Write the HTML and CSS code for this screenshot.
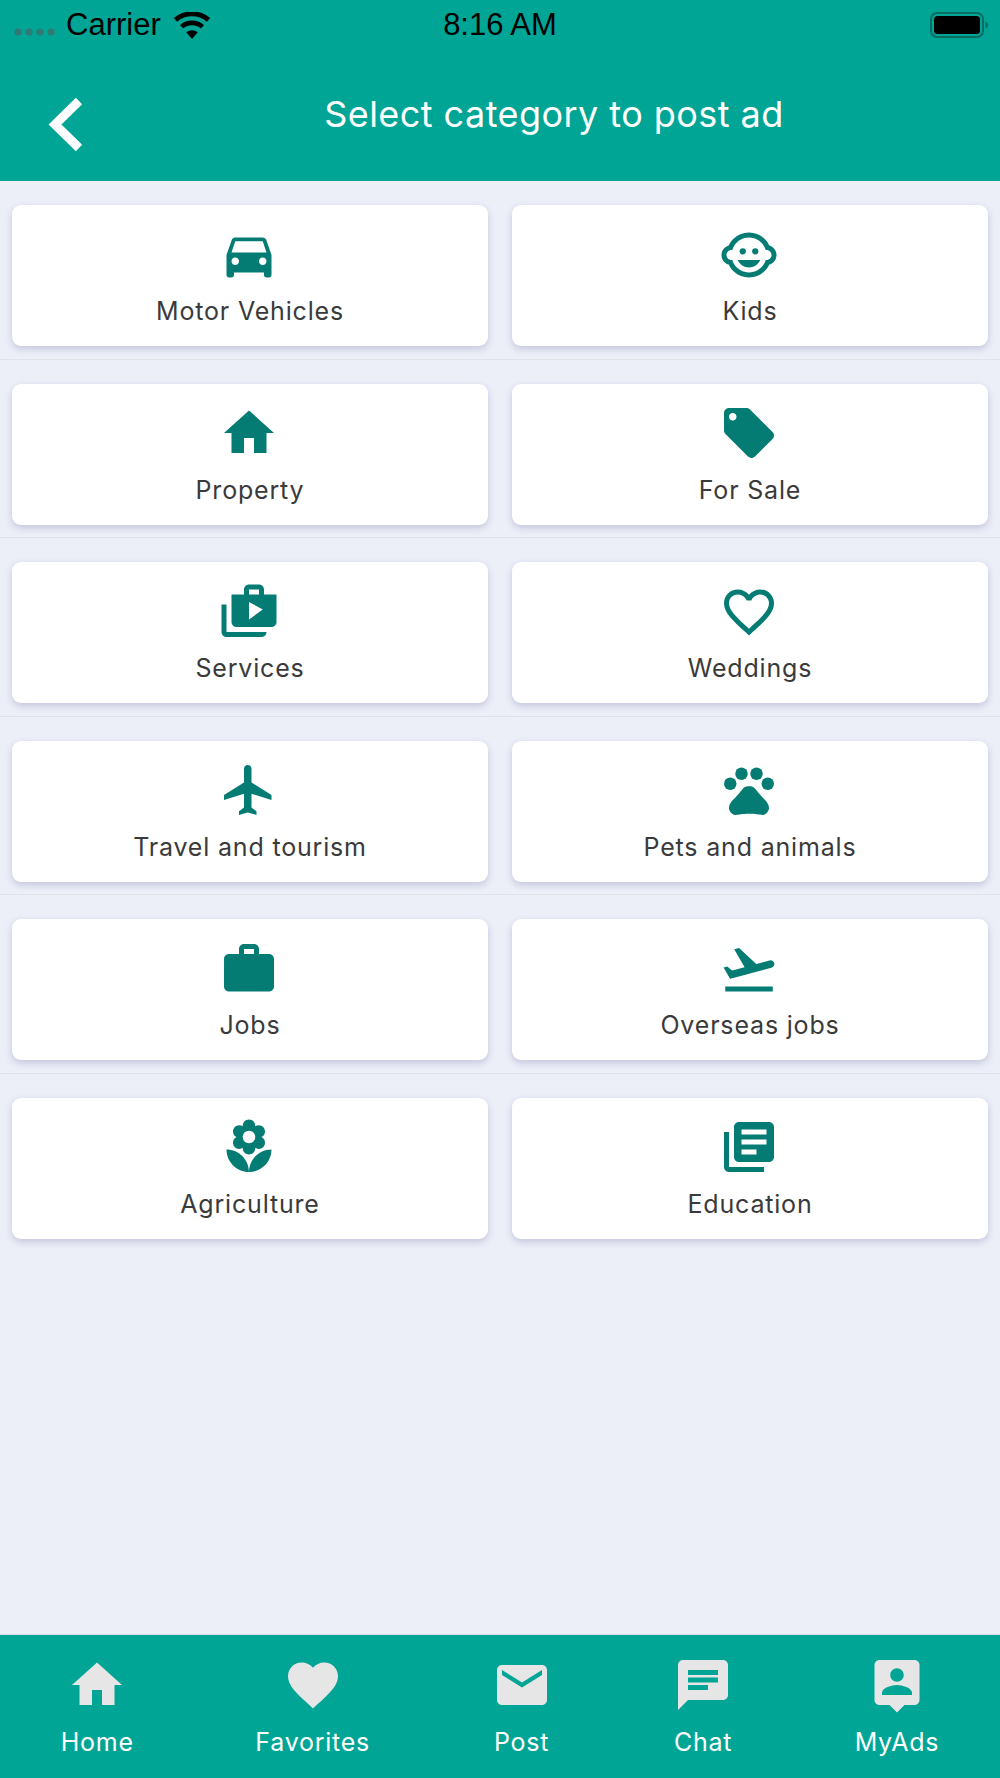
FILE: index.html
```html
<!DOCTYPE html>
<html lang="en">
<head>
<meta charset="utf-8">
<title>Select category to post ad</title>
<link rel="stylesheet" href="styles.css">
</head>
<body>
<div class="app">
  <header class="header">
    <div class="status">
      <div class="status-left">
        <svg class="signal" viewBox="0 0 42 8"><circle cx="4" cy="4" r="3.6"/><circle cx="15" cy="4" r="3.6"/><circle cx="26" cy="4" r="3.6"/><circle cx="37" cy="4" r="3.6"/></svg>
        <span class="carrier">Carrier</span>
        <svg class="wifi" viewBox="0 0 36 26"><path d="M18 26 L12.5 19.5 A8.5 8.5 0 0 1 23.5 19.5 Z"/><path d="M9.5 16 L6.5 12.5 A17.5 17.5 0 0 1 29.5 12.5 L26.5 16 A13 13 0 0 0 9.5 16 Z"/><path d="M3.7 9.3 L0.5 5.8 A27 27 0 0 1 35.5 5.8 L32.3 9.3 A22.5 22.5 0 0 0 3.7 9.3 Z"/></svg>
      </div>
      <div class="clock">8:16 AM</div>
      <div class="status-right">
        <svg class="battery" viewBox="0 0 58 26"><rect class="battery-shell" x="1" y="1" width="52" height="24" rx="6"/><rect x="4" y="4" width="46" height="18" rx="3.5"/><path class="battery-tip" d="M55.5 9.5c1.6.5 2.5 2 2.5 3.5s-.9 3-2.5 3.5z"/></svg>
      </div>
    </div>
    <div class="nav">
      <div class="back">
        <svg class="chevron" viewBox="0 0 35 53"><polyline points="31,3 7,26.5 31,50"/></svg>
      </div>
      <h1 class="title">Select category to post ad</h1>
    </div>
  </header>

  <main class="list">
    <section class="row">
      <div class="card">
        <svg class="icon" viewBox="0 0 24 24"><path d="M18.92 6.01C18.72 5.42 18.16 5 17.5 5h-11c-.66 0-1.21.42-1.42 1.01L3 12v8c0 .55.45 1 1 1h1c.55 0 1-.45 1-1v-1h12v1c0 .55.45 1 1 1h1c.55 0 1-.45 1-1v-8l-2.08-5.99zM6.5 16c-.83 0-1.5-.67-1.5-1.5S5.67 13 6.5 13s1.5.67 1.5 1.5S7.33 16 6.5 16zm11 0c-.83 0-1.5-.67-1.5-1.5s.67-1.5 1.5-1.5 1.5.67 1.5 1.5-.67 1.5-1.5 1.5zM5 11l1.5-4.5h11L19 11H5z"/></svg>
        <span class="label">Motor Vehicles</span>
      </div>
      <div class="card">
        <svg class="icon" viewBox="0 0 24 24"><circle cx="14.5" cy="10.5" r="1.25"/><circle cx="9.5" cy="10.5" r="1.25"/><path d="M22.94 12.66c.04-.21.06-.43.06-.66s-.02-.45-.06-.66c-.25-1.51-1.36-2.74-2.81-3.17-.53-1.12-1.28-2.1-2.19-2.91C16.36 3.85 14.28 3 12 3s-4.36.85-5.94 2.26c-.92.81-1.67 1.8-2.19 2.91-1.45.43-2.56 1.65-2.81 3.17-.04.21-.06.43-.06.66s.02.45.06.66c.25 1.51 1.36 2.74 2.81 3.17.52 1.11 1.27 2.09 2.17 2.89C7.62 20.14 9.71 21 12 21s4.38-.86 5.97-2.28c.9-.8 1.65-1.79 2.17-2.89 1.44-.43 2.55-1.65 2.8-3.17zM19 14c-.1 0-.19-.02-.29-.03-.2.67-.49 1.29-.86 1.86C16.6 17.74 14.45 19 12 19s-4.6-1.26-5.85-3.17c-.37-.57-.66-1.19-.86-1.86-.1.01-.19.03-.29.03-1.1 0-2-.9-2-2s.9-2 2-2c.1 0 .19.02.29.03.2-.67.49-1.29.86-1.86C7.4 6.26 9.55 5 12 5s4.6 1.26 5.85 3.17c.37.57.66 1.19.86 1.86.1-.01.19-.03.29-.03 1.1 0 2 .9 2 2s-.9 2-2 2zM7.5 14c.76 1.77 2.49 3 4.5 3s3.74-1.23 4.5-3h-9z"/></svg>
        <span class="label">Kids</span>
      </div>
    </section>
    <section class="row">
      <div class="card">
        <svg class="icon" viewBox="0 0 24 24"><path d="M10 20v-6h4v6h5v-8h3L12 3 2 12h3v8z"/></svg>
        <span class="label">Property</span>
      </div>
      <div class="card">
        <svg class="icon" viewBox="0 0 24 24"><path d="M21.41 11.58l-9-9C12.05 2.22 11.55 2 11 2H4c-1.1 0-2 .9-2 2v7c0 .55.22 1.05.59 1.42l9 9c.36.36.86.58 1.41.58.55 0 1.05-.22 1.41-.59l7-7c.37-.36.59-.86.59-1.41 0-.55-.23-1.06-.59-1.42zM5.5 7C4.67 7 4 6.33 4 5.5S4.67 4 5.5 4 7 4.67 7 5.5 6.33 7 5.5 7z"/></svg>
        <span class="label">For Sale</span>
      </div>
    </section>
    <section class="row">
      <div class="card">
        <svg class="icon" viewBox="0 0 24 24"><path d="M3 9H1v11c0 1.11.89 2 2 2h14c1.11 0 2-.89 2-2H3V9zm15-4V3c0-1.11-.89-2-2-2h-4c-1.11 0-2 .89-2 2v2H5v11c0 1.11.89 2 2 2h14c1.11 0 2-.89 2-2V5h-5zm-6-2h4v2h-4V3zm0 12V8l5.5 3-5.5 4z"/></svg>
        <span class="label">Services</span>
      </div>
      <div class="card">
        <svg class="icon" viewBox="0 0 24 24"><path d="M16.5 3c-1.74 0-3.41.81-4.5 2.09C10.91 3.81 9.24 3 7.5 3 4.42 3 2 5.42 2 8.5c0 3.78 3.4 6.86 8.55 11.54L12 21.35l1.45-1.32C18.6 15.36 22 12.28 22 8.5 22 5.42 19.58 3 16.5 3zm-4.4 15.55l-.1.1-.1-.1C7.14 14.24 4 11.39 4 8.5 4 6.5 5.5 5 7.5 5c1.54 0 3.04.99 3.57 2.36h1.87C13.46 5.99 14.96 5 16.5 5c2 0 3.5 1.5 3.5 3.5 0 2.89-3.14 5.74-7.9 10.05z"/></svg>
        <span class="label">Weddings</span>
      </div>
    </section>
    <section class="row">
      <div class="card">
        <svg class="icon" viewBox="0 0 24 24"><path d="M21 16v-2l-8-5V3.5c0-.83-.67-1.5-1.5-1.5S10 2.67 10 3.5V9l-8 5v2l8-2.5V19l-2 1.5V22l3.5-1 3.5 1v-1.5L13 19v-5.5l8 2.5z"/></svg>
        <span class="label">Travel and tourism</span>
      </div>
      <div class="card">
        <svg class="icon" viewBox="0 0 24 24"><circle cx="4.5" cy="9.5" r="2.5"/><circle cx="9" cy="5.5" r="2.5"/><circle cx="15" cy="5.5" r="2.5"/><circle cx="19.5" cy="9.5" r="2.5"/><path d="M17.34 14.86c-.87-1.02-1.6-1.89-2.48-2.91-.46-.54-1.05-1.08-1.75-1.32-.11-.04-.22-.07-.33-.09-.25-.04-.52-.04-.78-.04s-.53 0-.79.05c-.11.02-.22.05-.33.09-.7.24-1.28.78-1.75 1.32-.87 1.02-1.6 1.89-2.48 2.91-1.31 1.31-2.92 2.76-2.62 4.79.29 1.02 1.02 2.03 2.33 2.32.73.15 3.06-.44 5.54-.44h.18c2.48 0 4.81.58 5.54.44 1.31-.29 2.04-1.31 2.33-2.32.31-2.04-1.3-3.49-2.61-4.8z"/></svg>
        <span class="label">Pets and animals</span>
      </div>
    </section>
    <section class="row">
      <div class="card">
        <svg class="icon" viewBox="0 0 24 24"><path d="M20 6h-4V4c0-1.11-.89-2-2-2h-4c-1.11 0-2 .89-2 2v2H4c-1.11 0-1.99.89-1.99 2L2 19c0 1.11.89 2 2 2h16c1.11 0 2-.89 2-2V8c0-1.11-.89-2-2-2zm-6 0h-4V4h4v2z"/></svg>
        <span class="label">Jobs</span>
      </div>
      <div class="card">
        <svg class="icon" viewBox="0 0 24 24"><path d="M2.5 19h19v2h-19zm19.57-9.36c-.21-.8-1.04-1.28-1.84-1.06L14.92 10l-6.9-6.43-1.93.51 4.14 7.17-4.97 1.33-1.97-1.54-1.45.39 1.82 3.16.77 1.33 1.6-.43 5.31-1.42 4.35-1.16L21 11.49c.81-.23 1.28-1.05 1.07-1.85z"/></svg>
        <span class="label">Overseas jobs</span>
      </div>
    </section>
    <section class="row row-last">
      <div class="card">
        <svg class="icon" viewBox="0 0 24 24"><path d="M12 22c4.97 0 9-4.03 9-9-4.97 0-9 4.03-9 9zM5.6 10.25c0 1.38 1.12 2.5 2.5 2.5.53 0 1.01-.16 1.42-.44l-.02.19c0 1.38 1.12 2.5 2.5 2.5s2.5-1.12 2.5-2.5l-.02-.19c.4.28.89.44 1.42.44 1.38 0 2.5-1.12 2.5-2.5 0-1-.59-1.85-1.43-2.25.84-.4 1.43-1.25 1.43-2.25 0-1.38-1.12-2.5-2.5-2.5-.53 0-1.01.16-1.42.44l.02-.19C14.5 2.12 13.38 1 12 1S9.5 2.12 9.5 3.5l.02.19c-.4-.28-.89-.44-1.42-.44-1.38 0-2.5 1.12-2.5 2.5 0 1 .59 1.85 1.43 2.25-.84.4-1.43 1.25-1.43 2.25zM12 5.5c1.38 0 2.5 1.12 2.5 2.5s-1.12 2.5-2.5 2.5S9.5 9.38 9.5 8s1.12-2.5 2.5-2.5zM3 13c0 4.97 4.03 9 9 9 0-4.97-4.03-9-9-9z"/></svg>
        <span class="label">Agriculture</span>
      </div>
      <div class="card">
        <svg class="icon" viewBox="0 0 24 24"><path d="M4 6H2v14c0 1.1.9 2 2 2h14v-2H4V6zm16-4H8c-1.1 0-2 .9-2 2v12c0 1.1.9 2 2 2h12c1.1 0 2-.9 2-2V4c0-1.1-.9-2-2-2zm-1 9H9V9h10v2zm-4 4H9v-2h6v2zm4-8H9V5h10v2z"/></svg>
        <span class="label">Education</span>
      </div>
    </section>
  </main>

  <footer class="tabs">
    <div class="tab">
      <svg class="tab-icon" viewBox="0 0 24 24"><path d="M10 20v-6h4v6h5v-8h3L12 3 2 12h3v8z"/></svg>
      <span class="tab-label">Home</span>
    </div>
    <div class="tab">
      <svg class="tab-icon" viewBox="0 0 24 24"><path d="M12 21.35l-1.45-1.32C5.4 15.36 2 12.28 2 8.5 2 5.42 4.42 3 7.5 3c1.74 0 3.41.81 4.5 2.09C13.09 3.81 14.76 3 16.5 3 19.58 3 22 5.42 22 8.5c0 3.78-3.4 6.86-8.55 11.54L12 21.35z"/></svg>
      <span class="tab-label">Favorites</span>
    </div>
    <div class="tab">
      <svg class="tab-icon" viewBox="0 0 24 24"><path d="M20 4H4c-1.1 0-1.99.9-1.99 2L2 18c0 1.1.9 2 2 2h16c1.1 0 2-.9 2-2V6c0-1.1-.9-2-2-2zm0 4l-8 5-8-5V6l8 5 8-5v2z"/></svg>
      <span class="tab-label">Post</span>
    </div>
    <div class="tab">
      <svg class="tab-icon" viewBox="0 0 24 24"><path d="M20 2H4c-1.1 0-1.99.9-1.99 2L2 22l4-4h14c1.1 0 2-.9 2-2V4c0-1.1-.9-2-2-2zM6 9h12v2H6V9zm8 5H6v-2h8v2zm4-6H6V6h12v2z"/></svg>
      <span class="tab-label">Chat</span>
    </div>
    <div class="tab">
      <svg class="tab-icon" viewBox="0 0 24 24"><path d="M19 2H5c-1.11 0-2 .9-2 2v14c0 1.1.89 2 2 2h4l3 3 3-3h4c1.1 0 2-.9 2-2V4c0-1.1-.9-2-2-2zm-7 3.3c1.49 0 2.7 1.21 2.7 2.7 0 1.49-1.21 2.7-2.7 2.7-1.49 0-2.7-1.21-2.7-2.7 0-1.49 1.21-2.7 2.7-2.7zM18 16H6v-.9c0-2 4-3.1 6-3.1s6 1.1 6 3.1v.9z"/></svg>
      <span class="tab-label">MyAds</span>
    </div>
  </footer>
</div>
</body>
</html>
```
FILE: styles.css
```css
* { box-sizing: border-box; }
html, body { margin: 0; padding: 0; }
body { font-family: Inter, Roboto, "Liberation Sans", sans-serif; background: #eceef8; }

.app { width: 1000px; height: 1778px; display: flex; flex-direction: column; overflow: hidden; }

.header { height: 181px; background: #00a595; flex: none; display: flex; flex-direction: column; }
.status { height: 50px; display: flex; align-items: center; justify-content: space-between; position: relative; padding: 0 12px 0 14px; color: #000; font-family: "Liberation Sans", Arial, sans-serif; font-size: 31px; }
.status-left { display: flex; align-items: center; }
.signal { width: 42px; height: 8px; fill: #2f7a72; margin-top: 14px; }
.carrier { margin-left: 10px; }
.wifi { width: 38px; height: 27px; margin-left: 12px; fill: #000; }
.clock { position: absolute; left: 0; right: 0; text-align: center; }
.battery { width: 58px; height: 26px; fill: #000; display: block; }
.battery-shell { fill: none; stroke: #0b6c64; stroke-width: 2; }
.battery-tip { fill: #0b6c64; }

.nav { flex: 1; display: flex; align-items: center; }
.back { width: 108px; padding: 18px 0 0 48px; flex: none; display: flex; }
.chevron { width: 35px; height: 53px; fill: none; stroke: #fff; stroke-width: 9; }
.title { flex: 1; margin: 0; padding-bottom: 4px; text-align: center; color: #fff; font-size: 36px; font-weight: 400; letter-spacing: .45px; }

.list { flex: 1; }
.row { display: grid; grid-template-columns: 1fr 1fr; gap: 24px; padding: 24px 12px 12.6px; border-bottom: 1px solid #e0e2ec; }
.row-last { border-bottom: 0; }
.card { background: #fff; border-radius: 9px; box-shadow: 0 3px 7px rgba(70, 74, 130, .24); padding: 19.5px 0 20px; display: flex; flex-direction: column; align-items: center; }
.icon { width: 60px; height: 60px; margin-right: 1.5px; fill: #047c74; display: block; }
.label { margin-top: 11.5px; font-size: 25px; line-height: 30px; color: #3a3a3a; letter-spacing: .82px; white-space: nowrap; }

.tabs { height: 144px; flex: none; background: #00a595; border-top: 1px solid #d9dbe4; padding-top: 19.5px; display: flex; justify-content: space-around; align-items: flex-start; }
.tab { display: flex; flex-direction: column; align-items: center; }
.tab-icon { width: 60px; height: 60px; fill: #e6e6e6; display: block; }
.tab-label { margin-top: 12px; font-size: 25px; line-height: 30px; color: #fff; letter-spacing: .75px; white-space: nowrap; }
```
